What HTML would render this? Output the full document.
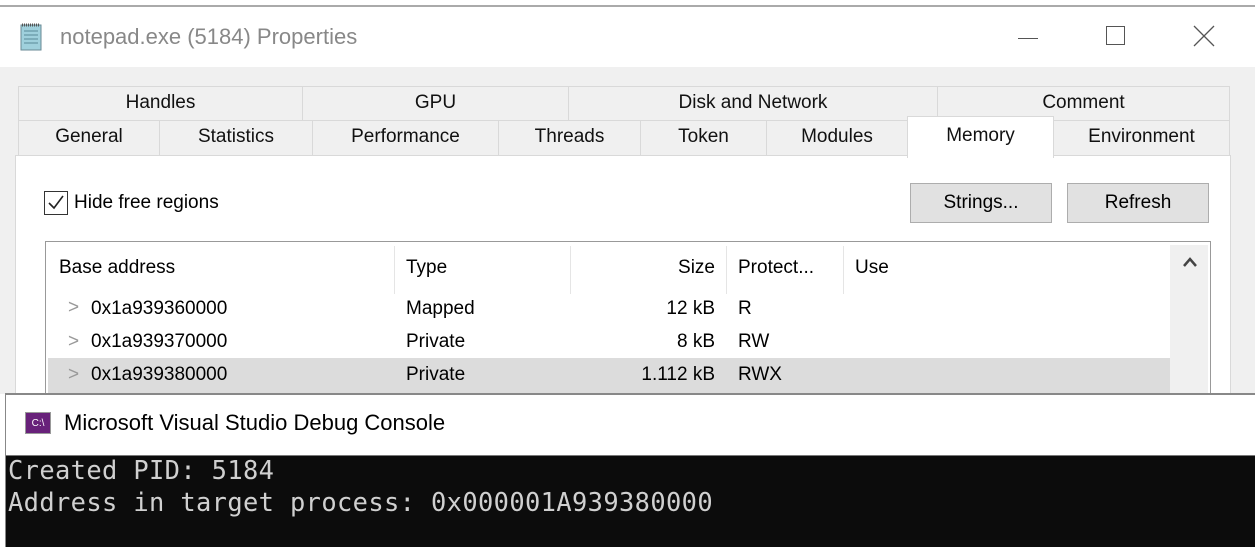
<!DOCTYPE html><html><head><style>
*{margin:0;padding:0;box-sizing:border-box}
body{width:1255px;height:547px;overflow:hidden;background:#fff;font-family:"Liberation Sans",sans-serif;font-size:19px;color:#000;position:relative}
.a{position:absolute}
.tab{position:absolute;background:#f0f0f0;border:1px solid #d9d9d9;text-align:center;line-height:32px;color:#111}
.btn{position:absolute;background:#e1e1e1;border:1px solid #adadad;text-align:center;line-height:38px}
.mono{font-family:"DejaVu Sans Mono","Liberation Mono",monospace;font-size:25.4px;letter-spacing:0.38px;color:#d0d0d0}
</style></head><body>
<div class="a" style="left:0;top:5px;width:1255px;height:2px;background:#aaa"></div>
<div class="a" style="left:0;top:7px;width:1255px;height:60px;background:#fff"></div>
<svg class="a" style="left:18px;top:22px" width="26" height="30"><rect x="3" y="3" width="20" height="25" fill="#9fd0dc" stroke="#6a8a95"/><path d="M6 9h14M6 13h14M6 17h14M6 21h14" stroke="#5a8a99"/><path d="M4 3h18" stroke="#555" stroke-dasharray="1 1" stroke-width="3"/></svg>
<div class="a" style="left:60px;top:24px;font-size:22px;color:#888">notepad.exe (5184) Properties</div>
<div class="a" style="left:1018px;top:38px;width:20px;height:1px;background:#555"></div>
<div class="a" style="left:1106px;top:26px;width:19px;height:19px;border:1px solid #555"></div>
<svg class="a" style="left:1193px;top:25px" width="22" height="22"><path d="M1 1L21 21M21 1L1 21" stroke="#555" stroke-width="1.3"/></svg>
<div class="a" style="left:0;top:67px;width:1255px;height:327px;background:#f0f0f0"></div>
<div class="tab" style="left:18px;top:86px;width:285px;height:35px">Handles</div>
<div class="tab" style="left:302px;top:86px;width:267px;height:35px">GPU</div>
<div class="tab" style="left:568px;top:86px;width:370px;height:35px">Disk and Network</div>
<div class="tab" style="left:937px;top:86px;width:293px;height:35px">Comment</div>
<div class="tab" style="left:18px;top:120px;width:142px;height:36px">General</div>
<div class="tab" style="left:159px;top:120px;width:154px;height:36px">Statistics</div>
<div class="tab" style="left:312px;top:120px;width:187px;height:36px">Performance</div>
<div class="tab" style="left:498px;top:120px;width:143px;height:36px">Threads</div>
<div class="tab" style="left:640px;top:120px;width:127px;height:36px">Token</div>
<div class="tab" style="left:766px;top:120px;width:142px;height:36px">Modules</div>
<div class="tab" style="left:1053px;top:120px;width:177px;height:36px">Environment</div>
<div class="a" style="left:15px;top:155px;width:1216px;height:245px;background:#fff;border:1px solid #d9d9d9"></div>
<div class="tab" style="left:907px;top:116px;width:147px;height:42px;background:#fff;border-bottom:none;line-height:38px">Memory</div>
<div class="a" style="left:44px;top:191px;width:24px;height:24px;border:1px solid #333;background:#fff"></div>
<svg class="a" style="left:46px;top:193px" width="20" height="20"><path d="M3 10l5 5 9-12" stroke="#222" stroke-width="1.6" fill="none"/></svg>
<div class="a" style="left:74px;top:192px">Hide free regions</div>
<div class="btn" style="left:910px;top:183px;width:142px;height:40px">Strings...</div>
<div class="btn" style="left:1067px;top:183px;width:142px;height:40px">Refresh</div>
<div class="a" style="left:45px;top:241px;width:1166px;height:160px;border:1px solid #999;background:#fff"></div>
<div class="a" style="left:1170px;top:245px;width:38px;height:150px;background:#f0f0f0"></div>
<svg class="a" style="left:1182px;top:256px" width="16" height="12"><path d="M2 10l6-7 6 7" stroke="#444" stroke-width="2.5" fill="none"/></svg>
<div class="a" style="left:394px;top:246px;width:1px;height:48px;background:#e5e5e5"></div>
<div class="a" style="left:570px;top:246px;width:1px;height:48px;background:#e5e5e5"></div>
<div class="a" style="left:726px;top:246px;width:1px;height:48px;background:#e5e5e5"></div>
<div class="a" style="left:843px;top:246px;width:1px;height:48px;background:#e5e5e5"></div>
<div class="a" style="left:59px;top:257px">Base address</div>
<div class="a" style="left:406px;top:257px">Type</div>
<div class="a" style="left:600px;top:257px;width:115px;text-align:right">Size</div>
<div class="a" style="left:738px;top:257px">Protect...</div>
<div class="a" style="left:855px;top:257px">Use</div>
<div class="a" style="left:48px;top:358px;width:1122px;height:36px;background:#dcdcdc"></div>
<div class="a" style="left:68px;top:297px;color:#999">&gt;</div><div class="a" style="left:91px;top:298px">0x1a939360000</div><div class="a" style="left:406px;top:298px">Mapped</div><div class="a" style="left:600px;top:298px;width:115px;text-align:right">12 kB</div><div class="a" style="left:738px;top:298px">R</div>
<div class="a" style="left:68px;top:331px;color:#999">&gt;</div><div class="a" style="left:91px;top:331px">0x1a939370000</div><div class="a" style="left:406px;top:331px">Private</div><div class="a" style="left:600px;top:331px;width:115px;text-align:right">8 kB</div><div class="a" style="left:738px;top:331px">RW</div>
<div class="a" style="left:68px;top:364px;color:#999">&gt;</div><div class="a" style="left:91px;top:364px">0x1a939380000</div><div class="a" style="left:406px;top:364px">Private</div><div class="a" style="left:600px;top:364px;width:115px;text-align:right">1.112 kB</div><div class="a" style="left:738px;top:364px">RWX</div>
<div class="a" style="left:5px;top:393px;width:1250px;height:154px;background:#fff;border-top:2px solid #888;border-left:1px solid #888"></div>
<div class="a" style="left:25px;top:412px;width:26px;height:22px;background:#68217a;color:#fff;font-size:10px;line-height:22px;text-align:center;border:1px solid #999">C:\</div>
<div class="a" style="left:64px;top:410px;font-size:22px">Microsoft Visual Studio Debug Console</div>
<div class="a" style="left:6px;top:455px;width:1249px;height:92px;background:#0c0c0c;border-top:1px solid #777"></div>
<div class="a mono" style="left:8px;top:455px">Created PID: 5184</div>
<div class="a mono" style="left:8px;top:487px">Address in target process: 0x000001A939380000</div>
</body></html>
